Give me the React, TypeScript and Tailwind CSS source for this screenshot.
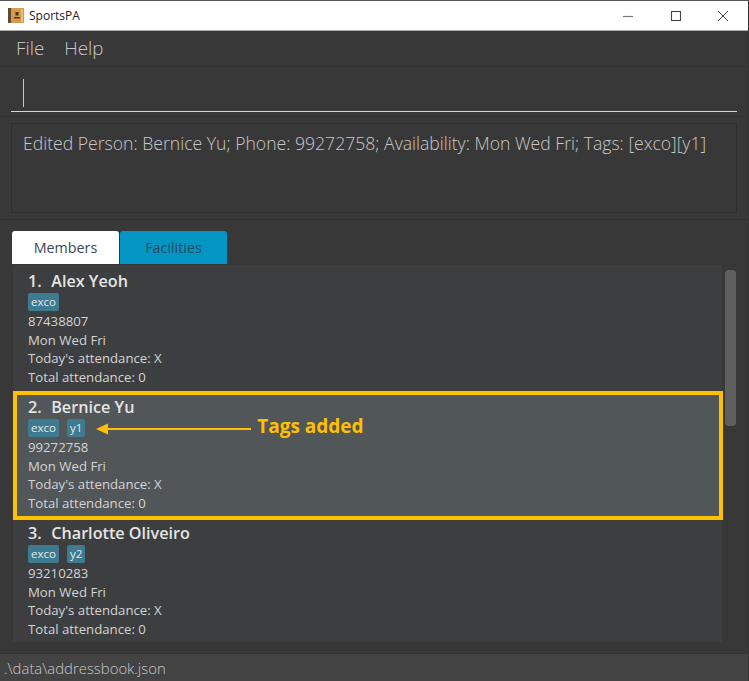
import React from 'react';

interface Member {
  index: number;
  name: string;
  tags: string[];
  phone: string;
  selected?: boolean;
}

const members: Member[] = [
  { index: 1, name: 'Alex Yeoh', tags: ['exco'], phone: '87438807' },
  { index: 2, name: 'Bernice Yu', tags: ['exco', 'y1'], phone: '99272758', selected: true },
  { index: 3, name: 'Charlotte Oliveiro', tags: ['exco', 'y2'], phone: '93210283' },
];

const AppIcon = () => (
  <svg width="16" height="15" viewBox="0 0 16 15" className="shrink-0">
    <rect x="0" y="0" width="16" height="15" fill="#d79a4c" />
    <rect x="0" y="0" width="3" height="15" fill="#5f4a3a" />
    <rect x="13" y="1" width="2" height="13" fill="#eebd78" />
    <path d="M7.5 4h3v3.5h-3zM6 9h6v1.5H6z" fill="#4a3520" />
  </svg>
);

const WindowButtons = () => (
  <div className="flex items-center">
    <svg width="12" height="12" viewBox="0 0 12 12" className="mr-[36px]">
      <path d="M1 6.5h10" stroke="#777" strokeWidth="1.2" />
    </svg>
    <svg width="12" height="12" viewBox="0 0 12 12" className="mr-[35px]">
      <rect x="1.5" y="1.5" width="9" height="9" fill="none" stroke="#444" strokeWidth="1.1" />
    </svg>
    <svg width="12" height="12" viewBox="0 0 12 12" className="mr-[19px]">
      <path d="M1 1l10 10M11 1L1 11" stroke="#444" strokeWidth="1" />
    </svg>
  </div>
);

const MemberCard = ({ member }: { member: Member }) => (
  <div
    className={
      member.selected
        ? 'relative -mb-[3px] -mr-[1px] h-[129px] border-[4px] border-[#ffc000] bg-[#515658] pl-[11px]'
        : 'h-[126px] pl-[15px] pt-[4px]'
    }
  >
    <div className="flex h-[24px] text-[16.2px] font-semibold leading-[24px] text-[#e4e4e4]">
      <span className="mr-[9.5px]">{member.index}.</span>
      <span>{member.name}</span>
    </div>
    <div className="flex h-[18px] items-center gap-[8px]">
      {member.tags.map((tag) => (
        <span
          key={tag}
          className="h-[18px] rounded-[2px] bg-[#3e7b91] px-[3px] text-[11.5px] leading-[18px] text-[#e8e8e8]"
        >
          {tag}
        </span>
      ))}
      {member.selected && (
        <div className="flex items-center">
          <svg width="155" height="14" viewBox="0 0 155 14" className="ml-[3px] mt-[1px]">
            <path d="M0 7L12 1.5V6H155V8H12V12.5Z" fill="#ffc000" />
          </svg>
          <span className="-mt-[5px] ml-[6px] text-[19px] font-bold leading-[18px] whitespace-nowrap text-[#ffc000]">
            Tags added
          </span>
        </div>
      )}
    </div>
    <div className="mt-[1px] text-[13.2px] leading-[18.67px] text-[#d4d4d4]">
      <div>{member.phone}</div>
      <div>Mon Wed Fri</div>
      <div>Today's attendance: X</div>
      <div>Total attendance: 0</div>
    </div>
  </div>
);

export default function App() {
  return (
    <div className="flex h-[681px] w-[749px] flex-col overflow-hidden border-t border-r border-t-[#555] border-r-[#333] bg-[#383838] font-['Open_Sans',sans-serif]">
      {/* Title bar */}
      <div className="flex h-[29px] shrink-0 items-center justify-between bg-white pl-[8px]">
        <div className="flex items-center gap-[5px]">
          <AppIcon />
          <span className="text-[12px] text-[#222]">SportsPA</span>
        </div>
        <WindowButtons />
      </div>

      {/* Menu */}
      <div className="flex h-[36px] shrink-0 items-center gap-[20px] border-t border-[#aaa] pl-[16px] text-[18.8px] font-light text-[#c8c8c8]">
        <span>File</span>
        <span>Help</span>
      </div>

      {/* Command box */}
      <div className="h-[51px] shrink-0 border-y border-[#333] px-[11px] pt-[10px]">
        <div className="h-[35px] border-b border-[#d8d8d8] pl-[12px] pt-[2px]">
          <div className="h-[28px] w-[1px] bg-[#c8c8c8]" />
        </div>
      </div>

      {/* Result display */}
      <div className="h-[103px] shrink-0 border-b border-[#2f2f2f] px-[11px] pt-[6px]">
        <div className="h-[90px] whitespace-nowrap border border-[#2e2e2e] pl-[11px] pt-[7px] text-[17.6px] font-light leading-[24px] text-[#c8c8c8]">
          Edited Person: Bernice Yu; Phone: 99272758; Availability: Mon Wed Fri; Tags: [exco][y1]
        </div>
      </div>

      {/* Tabs */}
      <div className="ml-[12px] mt-[11px] flex h-[33px] shrink-0 gap-[1px] text-[14.3px] leading-[33px]">
        <div className="w-[107px] rounded-t-[3px] bg-white text-center text-[#3a4658]">Members</div>
        <div className="w-[107px] rounded-t-[3px] bg-[#0396c4] text-center text-[#264a60]">Facilities</div>
      </div>

      {/* List */}
      <div className="ml-[13px] mt-[1px] flex h-[377px] shrink-0">
        <div className="w-[709px] bg-[#3c3e3f]">
          {members.map((member) => (
            <MemberCard key={member.index} member={member} />
          ))}
        </div>
        <div className="ml-[3px] mt-[5px] h-[156px] w-[11px] rounded-[4px] bg-[#5f5f5f]" />
      </div>

      {/* Status bar */}
      <div className="mt-[11px] flex-1 border-t border-[#333] bg-[#434343] pl-[4px] text-[14.9px] font-light leading-[28px] text-[#c8c8c8]">
        .\data\addressbook.json
      </div>
    </div>
  );
}
